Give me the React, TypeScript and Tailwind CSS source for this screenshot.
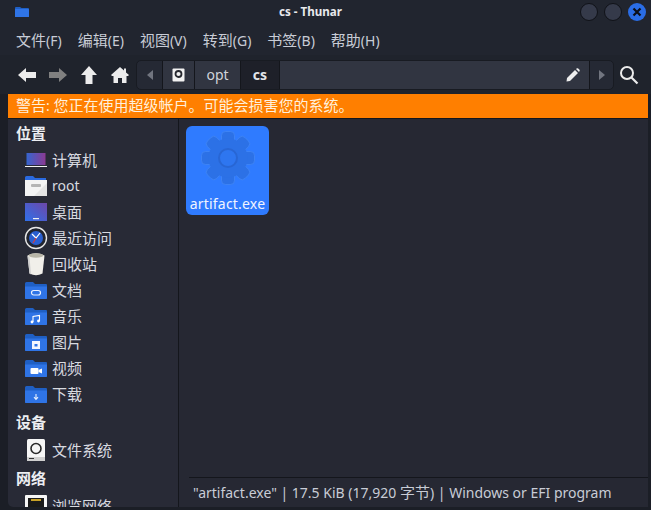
import React from 'react';

const FONT = "[font-family:'Noto_Sans','Noto_Sans_CJK_SC',sans-serif]";

// the screenshot draws han characters a size up from the latin text
function Mixed({ text }: { text: string }) {
  const parts = text.split(/([\u3000-\u9fff]+)/);
  return (
    <>
      {parts.map((p, i) =>
        i % 2 === 1 ? (
          <span key={i} className="text-[15px]">
            {p}
          </span>
        ) : (
          <span key={i}>{p}</span>
        ),
      )}
    </>
  );
}

function FolderBase({ children }: { children?: React.ReactNode }) {
  return (
    <svg width="24" height="20" viewBox="0 0 24 20">
      <path d="M1 3.5 Q1 2 2.5 2 H9 L11 4 H22 Q23 4 23 5 V18 Q23 19 22 19 H2 Q1 19 1 18 Z" fill="#1f5fc4" />
      <path d="M1 6.5 H23 V18 Q23 19 22 19 H2 Q1 19 1 18 Z" fill="#2f74e6" />
      {children}
    </svg>
  );
}

function LaptopIcon() {
  return (
    <svg width="24" height="20" viewBox="0 0 24 20">
      <defs>
        <linearGradient id="lap" x1="0" y1="0" x2="1" y2="0">
          <stop offset="0" stopColor="#3565d0" />
          <stop offset="1" stopColor="#8b3a92" />
        </linearGradient>
      </defs>
      <rect x="2.5" y="3" width="19" height="12" fill="url(#lap)" />
      <rect x="1" y="16" width="22" height="1" fill="#f2f2f2" />
    </svg>
  );
}

function RootIcon() {
  return (
    <svg width="24" height="22" viewBox="0 0 24 22">
      <path d="M1 2.5 Q1 1 2.5 1 H9 L11 3 H22 V6 H1 Z" fill="#2a6ae0" />
      <rect x="1" y="5" width="22" height="16" fill="#f4f4f4" />
      <path d="M23 8 V21 H10 Z" fill="#e4e4e4" />
      <rect x="7" y="9" width="10" height="3" rx="1" fill="#b5b5b5" />
    </svg>
  );
}

function DesktopIcon() {
  return (
    <svg width="24" height="20" viewBox="0 0 24 20">
      <defs>
        <linearGradient id="desk" x1="0" y1="1" x2="1" y2="0">
          <stop offset="0" stopColor="#2f70ea" />
          <stop offset="1" stopColor="#6e47a8" />
        </linearGradient>
      </defs>
      <rect x="1" y="1" width="22" height="18" fill="url(#desk)" />
      <rect x="9" y="16" width="6" height="1.2" fill="#f0f0f0" />
    </svg>
  );
}

function RecentIcon() {
  return (
    <svg width="24" height="24" viewBox="0 0 24 24">
      <circle cx="12" cy="12" r="10.5" fill="#22252f" stroke="#e6e6e6" strokeWidth="1.4" />
      <circle cx="12" cy="12" r="7" fill="#2a5fd0" />
      <path d="M8 8 L12 12 L16 7" stroke="#ffffff" strokeWidth="1.2" fill="none" />
      <path d="M12 12 L9 17" stroke="#d83a3a" strokeWidth="1.2" />
    </svg>
  );
}

function TrashIcon() {
  return (
    <svg width="20" height="24" viewBox="0 0 20 24">
      <path d="M1.5 3.5 Q10 -1 18.5 3.5 L16.5 21.5 Q10 25 3.5 21.5 Z" fill="#f1efea" />
      <ellipse cx="10" cy="3.5" rx="7.5" ry="2.2" fill="#b9b6a8" />
      <path d="M1.5 4 L3.5 21.5 L5 22.4 L3.5 5 Z" fill="#cfcfcf" />
    </svg>
  );
}

function DriveIcon() {
  return (
    <svg width="18" height="22" viewBox="0 0 18 22">
      <rect x="0" y="0" width="18" height="22" rx="1.5" fill="#f6f6f6" />
      <circle cx="9" cy="9.5" r="5" fill="none" stroke="#2a2a2a" strokeWidth="1.6" />
      <rect x="0" y="18" width="18" height="4" fill="#cfcfcf" />
      <rect x="2" y="19" width="5" height="1" fill="#333" />
    </svg>
  );
}

function NetworkIcon() {
  return (
    <svg width="22" height="22" viewBox="0 0 22 22">
      <rect x="0" y="0" width="22" height="22" rx="1" fill="#f6f6f6" />
      <rect x="3" y="3" width="16" height="13" fill="#1a1a1a" />
      <rect x="6" y="4" width="10" height="2" fill="#c9a227" />
    </svg>
  );
}

function Gear() {
  const teeth = [0, 45, 90, 135, 180, 225, 270, 315];
  return (
    <svg width="56" height="56" viewBox="0 0 56 56">
      <g fill="#2c71e6" stroke="#4186f5" strokeWidth="0.8">
        {teeth.map((a) => (
          <rect key={a} x="21.5" y="1.5" width="13" height="14" rx="4" transform={`rotate(${a} 28 28)`} />
        ))}
      </g>
      <circle cx="28" cy="28" r="19.5" fill="#2c71e6" />
      <circle cx="28" cy="28" r="9" fill="#2e76f0" stroke="#2866d4" strokeWidth="2" />
    </svg>
  );
}

function NavIcon({ d, fill }: { d: string; fill: string }) {
  return (
    <svg width="20" height="20" viewBox="0 0 20 20">
      <path d={d} fill={fill} />
    </svg>
  );
}

function Item({ icon, label }: { icon: React.ReactNode; label: string }) {
  return (
    <div className="flex h-[26px] shrink-0 items-center">
      <div className="w-[44px] shrink-0 pl-[12px]">
        <div className="flex w-[32px] items-center justify-center">{icon}</div>
      </div>
      <span className="text-[14px] leading-[20px] text-[#d8dae0]">
        <Mixed text={label} />
      </span>
    </div>
  );
}

function Heading({ label, first }: { label: string; first?: boolean }) {
  return (
    <div
      className={`flex shrink-0 items-center pl-[8px] text-[15px] leading-[20px] font-bold text-[#eceef2] ${
        first ? 'h-[28px]' : 'h-[30px]'
      }`}
    >
      {label}
    </div>
  );
}

const menus = ['文件(F)', '编辑(E)', '视图(V)', '转到(G)', '书签(B)', '帮助(H)'];

export default function App() {
  return (
    <div className={`flex h-[510px] w-[651px] flex-col overflow-hidden bg-[#21252f] ${FONT}`}>
      <div className="flex h-[24px] shrink-0 items-center justify-between pl-[15px] pr-[5px]">
        <svg width="14" height="10" viewBox="0 0 14 10">
          <path d="M0 1 Q0 0 1 0 H5 L6.5 1 H13 Q14 1 14 2 V3 H0 Z" fill="#1f5fc4" />
          <rect x="0" y="2" width="14" height="8" rx="0.6" fill="#2f74e6" />
        </svg>
        <span className="ml-[12px] text-[11.6px] font-bold text-[#e8e9ec]">cs - Thunar</span>
        <div className="flex items-center gap-[6px]">
          <div className="h-[18px] w-[18px] rounded-full border border-[#101218] bg-[#353a4a]" />
          <div className="h-[18px] w-[18px] rounded-full border border-[#101218] bg-[#353a4a]" />
          <div className="flex h-[18px] w-[18px] items-center justify-center rounded-full bg-[#2a6de6]">
            <svg width="10" height="10" viewBox="0 0 10 10">
              <path d="M1.5 1.5 L8.5 8.5 M8.5 1.5 L1.5 8.5" stroke="#0c0f18" strokeWidth="2.2" />
            </svg>
          </div>
        </div>
      </div>

      <div className="flex h-[31px] shrink-0 items-center gap-[16px] pl-[16px] pt-[2px] text-[14px] leading-[20px] text-[#c8ccd6]">
        {menus.map((m) => (
          <span key={m}>
            <Mixed text={m} />
          </span>
        ))}
      </div>

      <div className="flex h-[39px] shrink-0 items-center bg-[#1f232c] pl-[17px]">
        <div className="flex w-[119px] shrink-0 items-center gap-[11px]">
          <NavIcon d="M9 3 L1 10 L9 17 V13 H19 V7 H9 Z" fill="#ececec" />
          <NavIcon d="M11 3 L19 10 L11 17 V13 H1 V7 H11 Z" fill="#808080" />
          <NavIcon d="M10 1 L18 10 H13.5 V19 H6.5 V10 H2 Z" fill="#ececec" />
          <NavIcon d="M10 2 L14 5.6 V3.5 H16 V7.4 L19 10 L18 11 H16.5 V18 H12 V13 H8 V18 H3.5 V11 H2 L1 10 Z" fill="#ececec" />
        </div>

        <div className="flex h-[30px] w-[478px] shrink-0 overflow-hidden rounded-[5px] border border-[#181b22] bg-[#252934]">
          <div className="flex w-[25px] items-center justify-center">
            <div className="h-0 w-0 border-y-[5px] border-r-[6px] border-y-transparent border-r-[#71757f]" />
          </div>
          <div className="flex w-[33px] items-center justify-center border-x border-[#14161c] bg-[#313541]">
            <svg width="13" height="14" viewBox="0 0 13 14">
              <rect x="0.5" y="0.5" width="12" height="13" rx="1" fill="#f2f2f2" />
              <circle cx="6.5" cy="6" r="3" fill="none" stroke="#26282f" strokeWidth="1.8" />
            </svg>
          </div>
          <div className="flex w-[46px] items-center justify-center border-r border-[#14161c] bg-[#313541] text-[14px] text-[#d0d3da]">
            opt
          </div>
          <div className="flex w-[38px] items-center justify-center bg-[#1e2029] text-[14px] font-bold text-[#e4e6ea]">
            cs
          </div>
          <div className="flex flex-1 items-center justify-end border-l border-[#14161c] bg-[#313541] pr-[9px]">
            <svg width="14" height="14" viewBox="0 0 14 14">
              <path d="M0.5 13.5 L1 10 L9 2 L12 5 L4 13 Z M10 1 L11 0.3 Q11.6 0 12.2 0.5 L13.5 1.8 Q14 2.4 13.6 3 L13 4 Z" fill="#eeeeee" />
            </svg>
          </div>
          <div className="flex w-[24px] items-center justify-center border-l border-[#14161c]">
            <div className="h-0 w-0 border-y-[5px] border-l-[6px] border-y-transparent border-l-[#71757f]" />
          </div>
        </div>

        <div className="ml-[5px]">
          <svg width="20" height="20" viewBox="0 0 20 20">
            <circle cx="8" cy="8" r="6" fill="none" stroke="#ececec" strokeWidth="2" />
            <path d="M12.5 12.5 L18.5 18.5" stroke="#ececec" strokeWidth="2.2" />
          </svg>
        </div>
      </div>

      <div className="flex min-h-0 flex-1 flex-col bg-[#1b1e26] pb-[3px] pl-[8px] pr-[3px]">
        <div className="flex h-[24px] shrink-0 items-center bg-[#ff7f00] pb-[2px] pl-[8px] text-[14px] leading-[20px] text-[#fff0dc]">
          <span>
            <Mixed text="警告: 您正在使用超级帐户。可能会损害您的系统。" />
          </span>
        </div>

        <div className="flex min-h-0 flex-1 border-t border-[#14161c]">
          <div className="flex w-[171px] shrink-0 flex-col overflow-hidden rounded-bl-[5px] border-r border-[#14161c] bg-[#282a36]">
            <Heading label="位置" first />
            <Item icon={<LaptopIcon />} label="计算机" />
            <Item icon={<RootIcon />} label="root" />
            <Item icon={<DesktopIcon />} label="桌面" />
            <Item icon={<RecentIcon />} label="最近访问" />
            <Item icon={<TrashIcon />} label="回收站" />
            <Item
              icon={
                <FolderBase>
                  <rect x="7.5" y="10.5" width="9" height="4.5" rx="2.2" fill="none" stroke="#e8f0ff" strokeWidth="1.2" />
                </FolderBase>
              }
              label="文档"
            />
            <Item
              icon={
                <FolderBase>
                  <path d="M9 16 V10.5 L15.5 9.5 V15" stroke="#fff" strokeWidth="1.1" fill="none" />
                  <circle cx="8" cy="16" r="1.4" fill="#fff" />
                  <circle cx="14.5" cy="15" r="1.4" fill="#fff" />
                </FolderBase>
              }
              label="音乐"
            />
            <Item
              icon={
                <FolderBase>
                  <rect x="8" y="9" width="8" height="8" fill="#f4f7ff" />
                  <rect x="10.5" y="12" width="3" height="2.5" fill="#2f74e6" />
                </FolderBase>
              }
              label="图片"
            />
            <Item
              icon={
                <FolderBase>
                  <rect x="6.5" y="10" width="8" height="6" rx="1" fill="#fff" />
                  <path d="M14.5 12 L18 10.5 V15.5 L14.5 14 Z" fill="#fff" />
                </FolderBase>
              }
              label="视频"
            />
            <Item
              icon={
                <FolderBase>
                  <path d="M12 10 V15 M10 13.2 L12 15.5 L14 13.2" stroke="#e8f0ff" strokeWidth="1.1" fill="none" />
                </FolderBase>
              }
              label="下载"
            />
            <Heading label="设备" />
            <Item icon={<DriveIcon />} label="文件系统" />
            <Heading label="网络" />
            <Item icon={<NetworkIcon />} label="浏览网络" />
          </div>

          <div className="flex min-w-0 flex-1 flex-col bg-[#262833]">
            <div className="min-h-0 flex-1 pl-[7px] pt-[7px]">
              <div className="flex h-[89px] w-[83px] flex-col items-center rounded-[6px] bg-[#2f7bff]">
                <div className="mt-[4px] h-[56px]">
                  <Gear />
                </div>
                <span className="mt-[8px] text-[14px] leading-[20px] tracking-[0.2px] text-[#f0f4ff]">artifact.exe</span>
              </div>
            </div>
            <div className="ml-[10px] flex h-[30px] shrink-0 items-center border-t border-[#14161c] pl-[4px] text-[14px] leading-[20px] text-[#c8ccd6]">
              <span>
                <Mixed text={'"artifact.exe" | 17.5 KiB (17,920 字节) | Windows or EFI program'} />
              </span>
            </div>
          </div>
        </div>
      </div>
    </div>
  );
}
